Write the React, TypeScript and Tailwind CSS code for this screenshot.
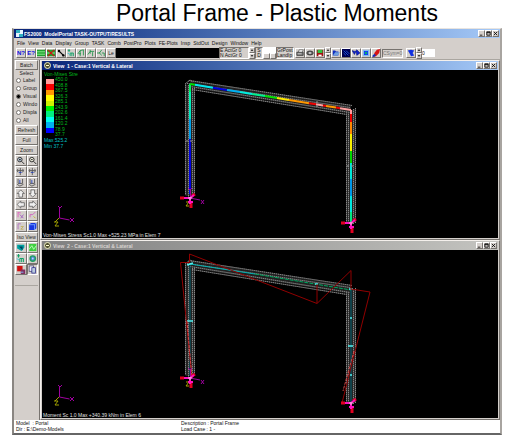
import React from "react";
import type { ReactNode } from "react";

const raised = "border border-t-white border-l-white border-b-[#77736f] border-r-[#77736f] bg-[#d4cfcb]";
const sunken = "border border-t-[#77736f] border-l-[#77736f] border-b-white border-r-white";

const menus = ["File", "View", "Data", "Display", "Group", "TASK", "Comb", "PostPro", "Plots", "FE-Plots", "Insp", "StdOut", "Design", "Window", "Help"];

function Icon({ name }: { name: string }) {
  const shapes: Record<string, ReactNode> = {
    mesh: <><rect x="0" y="1" width="10" height="8" fill="#20a030" /><path d="M0 3.500h10M0 6.500h10" stroke="#9dff9d" /></>,
    meshX: <><rect x="0" y="1" width="10" height="8" fill="#20a030" /><path d="M0 5h10" stroke="#9dff9d" /><path d="M1 1l8 8M9 1l-8 8" stroke="#d01010" strokeWidth="1.500" /></>,
    pen: <><path d="M2 2l6 6" stroke="#000" strokeWidth="1.600" /><circle cx="2.500" cy="2.500" r="1.500" fill="#000" /><circle cx="8" cy="8" r="1.500" fill="#000" /></>,
    node1: <><path d="M1 2h3M2.500 0v4M4 9V5h4v4M6 5v4" stroke="#00a060" fill="none" /><path d="M1 5l2 2" stroke="#00c0e0" /></>,
    node2: <path d="M1 6l3-4 4-1M4 2v7M8 1v7M2 6h3" stroke="#109040" fill="none" />,
    node3: <path d="M1 7l3-4h5M4 1v5M7 4v5" stroke="#109040" fill="none" />,
    node4: <path d="M0 5h4M6 1L3 5l3 3M6 5h3v4" stroke="#109040" fill="none" />,
    print: <><path d="M3 4l1-3h5L8 4" fill="#fff" stroke="#333" strokeWidth=".7" /><path d="M1 4h8v4H1z" fill="#777" stroke="#222" strokeWidth=".8" /><path d="M2 6h5" stroke="#ddd" /></>,
    eye: <><ellipse cx="5" cy="5" rx="4" ry="2.500" fill="#777" stroke="#222" /><circle cx="5" cy="5" r="1.200" fill="#ddd" /></>,
    save: <><rect x="1" y="1" width="8" height="8" fill="#a01010" /><rect x="2" y="1" width="6" height="4" fill="#30c040" /><rect x="3" y="7" width="4" height="2" fill="#fff" /></>,
    folder: <><path d="M1 8V2h3l1 1h3v5z" fill="#1030c0" /><path d="M1 8l3-4h6L7 8z" fill="#70a0e0" /></>,
    plot: <><rect x="0" y="0" width="10" height="10" fill="#000050" /><path d="M2 2l6 6M2 5l3 3M5 2l4 4" stroke="#2060ff" /></>,
    pan: <path d="M0 2l3 5 2-4 1 5 4-3-4-4-2 2z" fill="#1020d0" stroke="#001060" strokeWidth=".6" />,
    square: <><rect x="1" y="1" width="8" height="8" fill="#80b8f0" /><rect x="3" y="3" width="4" height="4" fill="#00b070" stroke="#1030ff" /></>,
    rocket: <><path d="M3 5l3-4 4-1-1 5-4 4-3 1z" fill="#d81414" /><path d="M0 9l3-3 2 2-3 2z" fill="#1030c0" /></>,
    flag: <path d="M1 2l4-1 4 1-2 3 2 3-4 1-2-4z" fill="#1030e0" />,
    zoomIn: <><circle cx="4" cy="4" r="2.500" fill="#cde" stroke="#222" /><path d="M6 6l3 3M3 4h2M4 3v2" stroke="#222" /></>,
    zoomOut: <><circle cx="4" cy="4" r="2.500" fill="#eed" stroke="#222" /><path d="M6 6l3 3M3 4h2" stroke="#222" /></>,
    rotX: <><path d="M4.500 1v8M1 4h7M2 2l-1 2 1 2M7 2l1 2-1 2" stroke="#555" fill="none" /><path d="M3 6h3" stroke="#2040c0" /></>,
    rotY: <><path d="M2 1v5h5V1M1 7l3 2 4-2" stroke="#555" fill="none" /><path d="M4 2v4" stroke="#2040c0" /></>,
    up: <path d="M5 1l4 4H7v4H3V5H1z" fill="#eee" stroke="#555" strokeWidth=".8" />,
    down: <path d="M5 9l4-4H7V1H3v4H1z" fill="#eee" stroke="#555" strokeWidth=".8" />,
    left: <path d="M1 5l4-4v2h4v4H5v2z" fill="#eee" stroke="#555" strokeWidth=".8" />,
    right: <path d="M9 5L5 1v2H1v4h4v2z" fill="#eee" stroke="#555" strokeWidth=".8" />,
    axes: <><path d="M2 1v6M2 2h3" stroke="#e060c0" fill="none" /><path d="M4 4l4 4M8 4l-3 4" stroke="#a060c0" /></>,
    axes2: <><path d="M2 7V4h3M5 4l3-3" stroke="#d060c0" fill="none" /><path d="M6 6l2 2" stroke="#c0b020" /></>,
    axes3: <><path d="M2 8V2h3" stroke="#b070c0" fill="none" /><path d="M5 5h3L5 8h3" stroke="#c0b060" fill="none" /></>,
    cube: <><path d="M1 3l2-2h6v6L7 9H1z" fill="#1838e0" /><path d="M1 3h6v6M7 3l2-2" stroke="#70a0ff" fill="none" /></>,
    tri: <><path d="M1 2h8v3L6 9 1 6z" fill="#00a0a0" /><path d="M3 4h4v4z" fill="#004060" /></>,
    grid: <><rect x="1" y="1" width="8" height="8" fill="#40d040" /><path d="M1 7l3-4 2 4 3-4" stroke="#c0ffc0" fill="none" /></>,
    ring: <><circle cx="5" cy="5" r="3" fill="#5080d0" stroke="#20a060" strokeWidth="1.500" /><circle cx="5" cy="5" r="1" fill="#b0e0ff" /></>,
    blocks: <><rect x="1" y="1" width="6" height="6" fill="#d01010" /><rect x="5" y="5" width="5" height="5" fill="#803060" /><path d="M5 8h3" stroke="#80c0ff" /></>,
    sheets: <><rect x="1" y="1" width="5" height="6" fill="#eef" stroke="#446" strokeWidth=".8" /><rect x="4" y="3" width="4" height="6" fill="#bcd" stroke="#228" strokeWidth=".8" /></>,
  };
  return <svg viewBox="0 0 10 10" fill="none" className="block size-full" aria-hidden="true">{shapes[name]}</svg>;
}

function Tool({ name, label }: { name?: string; label?: string }) {
  return (
    <button aria-label={name} className={`${raised} flex h-[10px] w-[10px] shrink-0 items-center justify-center whitespace-nowrap`}>
      {name && <Icon name={name} />}
      {label && <span className={label === "Le" ? "text-[#222]" : "text-[6px] font-bold text-[#1010e0]"}>{label}</span>}
    </button>
  );
}

function Spinner() {
  return (
    <div className="flex w-[6px] shrink-0 flex-col">
      {["M1 3l2-2 2 2z", "M1 1l2 2 2-2z"].map((d, i) => (
        <button key={d} aria-label={i ? "Decrease" : "Increase"} className={`${raised} h-[6px]`}>
          <svg viewBox="0 0 6 4" className="block size-full"><path d={d} fill="#000" /></svg>
        </button>
      ))}
    </div>
  );
}

function WindowButtons() {
  return (
    <div className="ml-auto flex shrink-0 pr-px">
      {["M1 5h3", "M1 1h4v4H1zM1 2h4", "M1 1l4 4M5 1l-4 4"].map((d, i) => (
        <button key={d} aria-label={["Minimize", "Maximize", "Close"][i]} className={`${raised} h-[7px] w-[7px]`}>
          <svg viewBox="0 0 6 6" className="block size-full"><path d={d} fill="none" stroke="#000" /></svg>
        </button>
      ))}
    </div>
  );
}

type Seg = [number, number, string];
const leftCol: Seg[] = [[84, 92, "#00f060"], [92, 103, "#00f8b0"], [103, 119, "#00e8c0"], [119, 139, "#00a0e8"], [139, 194, "#0000e0"]];
const beam: Seg[] = [[190, 195, "#00e000"], [195, 213, "#00e8f0"], [213, 227, "#0000e0"], [227, 240, "#00b0f0"], [240, 252, "#00f0e0"], [252, 265, "#00f090"], [265, 277, "#00e000"], [277, 289, "#ffe800"], [289, 309, "#ff9800"], [309, 316, "#f00000"], [316, 323, "#ffa0a0"], [323, 326, "#f00000"], [326, 336, "#ff9800"], [336, 340, "#f00000"], [340, 351, "#ffa0a0"]];
const rightCol: Seg[] = [[110, 114, "#ffa0a0"], [114, 122, "#f00000"], [122, 134, "#ff8800"], [134, 151, "#f8f000"], [151, 163, "#00d800"], [163, 179, "#00e8d8"], [179, 196, "#0098e8"], [196, 212, "#00e8e0"], [212, 224, "#00e880"]];
const beamY = (x: number) => 84 + ((x - 190) * 26) / 161;

function Member({ lines }: { lines: string }) {
  return (
    <>
      <path d={lines} stroke="#484848" strokeWidth="1" />
      <path d={lines} stroke="#868686" strokeWidth="1" strokeDasharray="1 1" />
    </>
  );
}

function Frame() {
  return (
    <g fill="none">
      <path d="M185.500 84v112h9V88" fill="#242424" />
      <path d="M346.500 111v112h9V109" fill="#242424" />
      <path d="M190 80l161 26v8L190 88z" fill="#202020" />
      <Member lines="M185.500 83v112M188.500 85v112M192.500 88v110M194.500 88v108M346.500 112v111M348.500 112v112M353.500 109v115M355.500 108v115" />
      <Member lines="M189 80.500l163 25M187 83.500l163 24M190 86.500l160 26M192 89.500l155 25M185 84l5-4 3 2" />
    </g>
  );
}

function Support({ x, y }: { x: number; y: number }) {
  return (
    <g fill="none">
      <path d={`M${x - 10} ${y}h4M${x + 1} ${y + 5}v5M${x + 2} ${y - 2}l3-2`} stroke="#e00020" strokeWidth="3" />
      <path d={`M${x - 6} ${y}h6M${x} ${y}v6M${x} ${y}l4-3M${x - 2} ${y + 4}h5`} stroke="#ff10c0" strokeWidth="2" />
      <path d={`M${x - 2} ${y}h4M${x} ${y - 1}v3`} stroke="#ffb0e8" />
    </g>
  );
}

function Axes({ y }: { y: number }) {
  return (
    <g fill="none">
      <path d={`M59.500 ${y - 10}v11l10 2M58 ${y - 11}l2 2 2-2M70 ${y + 1}l4 4M74 ${y + 1}l-4 4`} stroke="#a000a0" />
      <path d={`M59 ${y + 1}l-4 4M54 ${y + 5}h4l-3 4h4`} stroke="#a0a000" />
    </g>
  );
}

function LocalAxes({ y }: { y: number }) {
  return (
    <g fill="none">
      <path d={`M190.500 ${y}v-9M188 ${y - 10}l2 2 2-2M190 ${y}l10 2M201 ${y + 2}l3 4M204 ${y + 2}l-3 4`} stroke="#a000a0" />
      <path d={`M186 ${y + 4}h3l-3 4h3`} stroke="#b0a000" />
    </g>
  );
}

function StressPlot() {
  return (
    <svg viewBox="42 70 456 168" className="block h-[168px] w-full" role="img" aria-label="Von-Mises stress plot">
      <Frame />
      {leftCol.map(([a, b, c]) => <path key={a} d={`M190 ${a}V${b}`} stroke={c} strokeWidth="2" />)}
      {rightCol.map(([a, b, c]) => <path key={a} d={`M351 ${a}V${b}`} stroke={c} strokeWidth="2" />)}
      {beam.map(([a, b, c]) => <path key={a} d={`M${a} ${beamY(a)}L${b} ${beamY(b)}`} stroke={c} strokeWidth="2" />)}
      <path d="M186 141h8M347 166h8M317 101v7" stroke="#999" strokeDasharray="2 2" />
      <LocalAxes y={198} />
      <Support x={190} y={198} />
      <Support x={351} y={223} />
      <Axes y={217} />
    </svg>
  );
}

function MomentPlot() {
  return (
    <svg viewBox="42 250 456 168" className="block h-[168px] w-full" role="img" aria-label="Bending moment plot">
      <g transform="translate(0 180)">
        <Frame />
        <path d="M190 84v112M351 110v112" stroke="#006070" strokeWidth="1" />
        <path d="M190 84l65 10" stroke="#00b0b0" />
        <path d="M255 94l96 16" stroke="#00a860" strokeDasharray="4 1" />
        <path d="M187 85l6-2M187 141h6M315 104h3M348 166h5M349 109h4M350 138h2M350 195h2" stroke="#50f0f0" strokeWidth="1.500" fill="none" />
      </g>
      <path d="M192 378L180.500 262.500h9V254L317 303.500l34-33V290M317 303V284M351 289l19 3L342 403l6 0" fill="none" stroke="#900000" />
      <path d="M187 321l5 57M354 351l-11 40" fill="none" stroke="#d04848" strokeDasharray="3 1" />
      <LocalAxes y={378} />
      <Support x={190} y={378} />
      <Support x={351} y={403} />
      <Axes y={396} />
    </svg>
  );
}

const legend: [string, string][] = [
  ["450.0", "bg-[#ff9c9c]"], ["408.8", "bg-[#f80000]"], ["367.5", "bg-[#ff9800]"], ["326.3", "bg-[#ffff00]"], ["285.1", "bg-[#d0f000]"],
  ["243.9", "bg-[#00f000]"], ["202.6", "bg-[#00f080]"], ["161.4", "bg-[#00fff0]"], ["120.2", "bg-[#00b0f0]"], ["78.9", "bg-[#0000ff]"],
];

function Legend() {
  return (
    <div className="absolute top-px left-[2px] text-[#00b81c]">
      <p>Von-Mises Stre</p>
      <div className="flex gap-px pl-[2px]">
        <div className="mt-[2px] flex h-[54px] w-[8px] flex-col">
          {legend.map(([v, c]) => <div key={v} className={`${c} flex-1`} />)}
        </div>
        <div className="flex h-[60px] flex-col justify-between leading-[5px]">
          {legend.map(([v]) => <span key={v}>{v}</span>)}
          <span>37.7</span>
        </div>
      </div>
      <p className="text-[#00c0c8]">Max 525.2</p>
      <p className="text-[#00c0c8]">Min 37.7</p>
    </div>
  );
}

function View({ title, active, caption, children }: { title: string; active?: boolean; caption: string; children: ReactNode }) {
  return (
    <section className="border border-t-[#f4f0ec] border-l-[#f4f0ec] border-b-[#77736f] border-r-[#77736f] bg-[#d4cfcb] px-px pb-px">
      <header className={`flex h-[9px] items-center gap-[2px] bg-linear-to-r pl-[2px] ${active ? "from-[#0a2478] to-[#a6caf8] text-white" : "from-[#808080] to-[#c4c4c0] text-[#d8d4d0]"}`}>
        <span className="flex size-[7px] items-center justify-center rounded-full border border-[#eeeec0] bg-[#505030]"><i className="h-px w-[3px] bg-[#ffffd0]" /></span>
        <h2 className="font-bold whitespace-nowrap">{title}</h2>
        <WindowButtons />
      </header>
      <div className="relative bg-black">
        {children}
        <p className="absolute bottom-0 left-px whitespace-nowrap text-[#e0e0e0]">{caption}</p>
      </div>
    </section>
  );
}

function Sidebar() {
  const wide = `${raised} h-[10px] w-full whitespace-nowrap`;
  return (
    <aside className="flex w-[25px] shrink-0 flex-col bg-[#d4cfcb] px-px text-center text-[#222]">
      <button className={wide}>Batch</button>
      <fieldset className="mb-px">
        <legend className="mx-auto">Select</legend>
        {["Label", "Group", "Visual", "Windo", "Displa", "All"].map((t) => (
          <label key={t} className="flex h-[8px] items-center gap-[2px] pl-px">
            <input type="radio" name="select" defaultChecked={t === "Visual"} className="size-[5px] shrink-0 appearance-none rounded-full border border-[#77736f] bg-white checked:bg-black" />
            {t}
          </label>
        ))}
      </fieldset>
      <button className={wide}>Refresh</button>
      <button className={wide}>Full</button>
      <button className={wide}>Zoom</button>
      <div className="grid grid-cols-2">
        {["zoomIn", "zoomOut", "rotX", "rotX", "rotY", "rotY", "up", "down", "left", "right", "axes", "axes2", "axes3", "cube"].map((n, i) => (
          <button key={i} aria-label={n} className={`${raised} h-[11px]`}><Icon name={n} /></button>
        ))}
      </div>
      <button className={wide}>Iso View</button>
      <div className="grid grid-cols-2 border-b border-[#aaa6a0] pb-[10px]">
        {["tri", "grid", "node1", "ring", "blocks", "sheets"].map((n) => (
          <button key={n} aria-label={n} className={`${n === "sheets" ? sunken : raised} h-[11px]`}><Icon name={n} /></button>
        ))}
      </div>
    </aside>
  );
}

export default function App() {
  return (
    <main className="min-h-screen bg-white pr-[8px] pl-[12px] font-['Liberation_Sans',Arial,sans-serif] text-[5px] leading-[6px] text-[#111]">
      <h1 className="h-[28px] pl-[40px] text-center text-[23px] leading-[26px] whitespace-nowrap text-black">Portal Frame - Plastic Moments</h1>
      <div className="border-t border-r-2 border-b-2 border-l-2 border-t-[#e8e4e0] border-r-[#a8a4a0] border-b-[#666] border-l-[#8a8682] bg-[#d4cfcb]">
        <header className="flex h-[9px] items-center gap-px bg-linear-to-r from-[#0a2478] to-[#a6caf8] pl-[2px] text-white">
          <svg viewBox="0 0 7 7" className="size-[7px]" aria-hidden="true"><rect width="7" height="7" fill="#e8f4ff" /><path d="M0 0h4v3H0zM3 4h4v3H3z" fill="#30b0c0" /></svg>
          <span className="font-bold whitespace-nowrap">FS2000&nbsp; ModelPortal TASK-OUTPUT/RESULTS</span>
          <WindowButtons />
        </header>
        <nav className="flex h-[9px] items-center gap-[3px] pl-[3px]">
          {menus.map((m) => <button key={m} className="whitespace-nowrap">{m}</button>)}
        </nav>
        <div className="flex h-[13px] items-center border-b border-[#aaa6a0] pl-[2px]">
          <Tool label="N?" /><Tool label="E?" />
          {["mesh", "meshX", "pen", "node1", "node2", "node3", "node4"].map((n) => <Tool key={n} name={n} />)}
          <Tool label="Le" />
          <input aria-label="Command" className="h-[10px] w-[103px] min-w-0 bg-black text-white" />
          <div className={`${sunken} h-[12px] w-[30px] shrink-0 leading-[5px] whitespace-nowrap`}>E ActGr 0<br />N ActGr 0</div>
          <Spinner />
          <div className={`${sunken} h-[12px] w-[8px] shrink-0 text-center leading-[5px]`}>S<br />D</div>
          <div className="w-[13px] shrink-0">
            <input aria-label="Step" className="block h-[6px] w-full bg-white" />
            <div className="flex h-[6px]"><button className={`${raised} h-[6px] flex-1`} aria-label="Previous" /><button className={`${raised} h-[6px] flex-1`} aria-label="Next" /></div>
          </div>
          <div className={`${sunken} mr-px h-[12px] w-[18px] shrink-0 leading-[5px] whitespace-nowrap`}>GrPost<br />LandIp</div>
          <Tool name="print" /><Tool name="eye" /><Tool name="save" />
          <Spinner />
          {["folder", "plot", "pan", "square", "rocket"].map((n) => <Tool key={n} name={n} />)}
          <div className={`${sunken} mr-[3px] ml-px h-[9px] w-[21px] shrink-0 text-center text-[#777]`}>CSym=0</div>
          <Tool name="flag" />
          <Spinner />
          <input aria-label="Load case" defaultValue="0" className="h-[8px] w-[13px] bg-white" />
        </div>
        <div className="flex">
          <Sidebar />
          <div className="flex min-w-0 flex-1 flex-col border-l border-[#77736f]">
            <View active title="View&nbsp; 1 - Case:1 Vertical & Lateral" caption="Von-Mises Stress Sc1.0  Max +525.23 MPa in Elem 7">
              <StressPlot />
              <Legend />
            </View>
            <View title="View&nbsp; 2 - Case:1 Vertical & Lateral" caption="Moment Sc 1.0  Max +340.39 kNm in Elem 6">
              <MomentPlot />
            </View>
          </div>
        </div>
        <footer className="flex h-[13px] bg-white pl-[2px]">
          <p className="w-[165px]">Model&nbsp; : Portal<br />Dir : E:\Demo-Models</p>
          <p>Description : Portal Frame<br />Load Case : 1 -</p>
        </footer>
      </div>
    </main>
  );
}
